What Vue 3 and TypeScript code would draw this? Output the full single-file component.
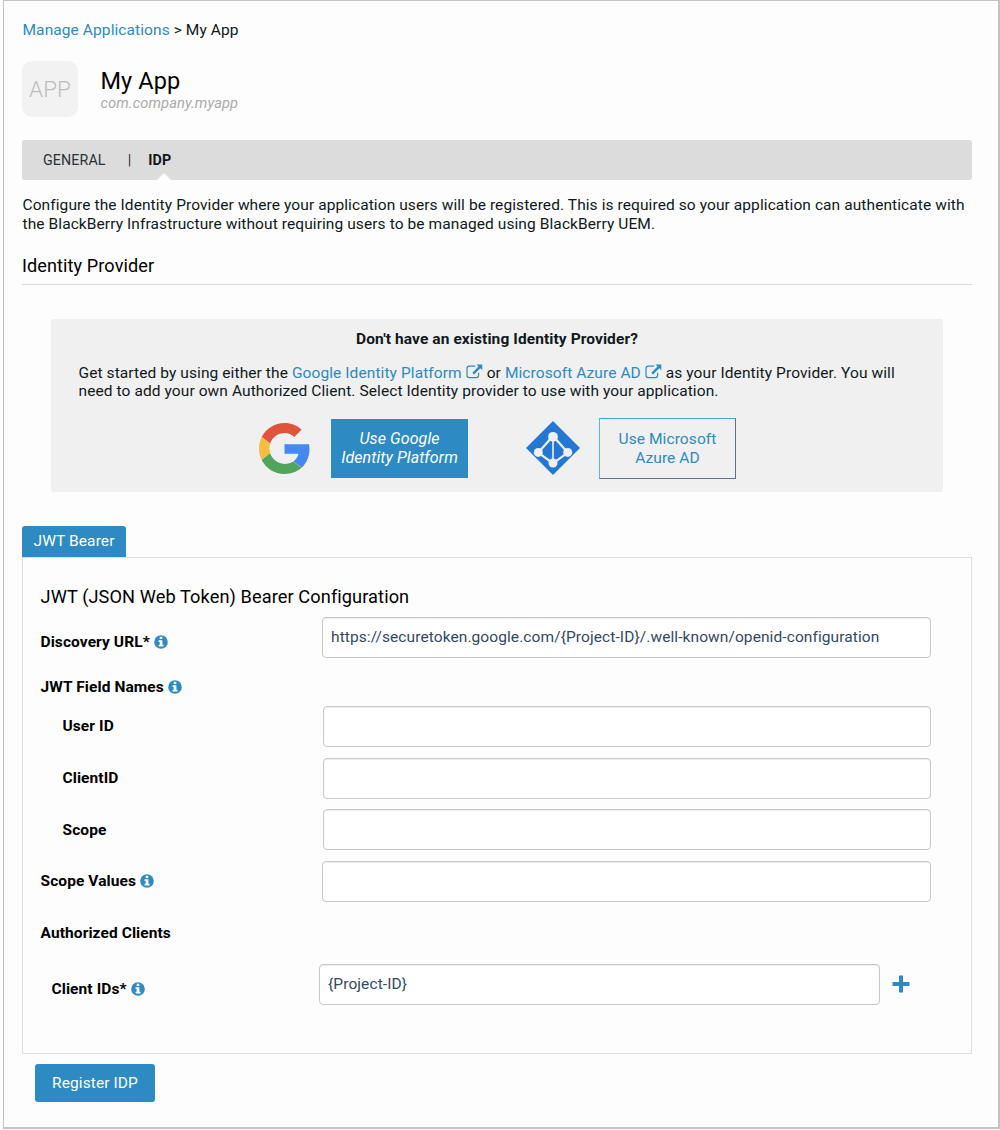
<script setup lang="ts">
import { ref } from 'vue'

interface FieldRow {
  key: string
  label: string
  level: 'top' | 'nested'
  info: boolean
  hasInput: boolean
}

const rows: FieldRow[] = [
  { key: 'discovery', label: 'Discovery URL*', level: 'top', info: true, hasInput: true },
  { key: 'names', label: 'JWT Field Names', level: 'top', info: true, hasInput: false },
  { key: 'user', label: 'User ID', level: 'nested', info: false, hasInput: true },
  { key: 'client', label: 'ClientID', level: 'nested', info: false, hasInput: true },
  { key: 'scope', label: 'Scope', level: 'nested', info: false, hasInput: true },
  { key: 'values', label: 'Scope Values', level: 'top', info: true, hasInput: true },
  { key: 'authorized', label: 'Authorized Clients', level: 'top', info: false, hasInput: false },
  { key: 'ids', label: 'Client IDs*', level: 'nested', info: true, hasInput: true },
]

const values = ref<Record<string, string>>({
  discovery: 'https://securetoken.google.com/{Project-ID}/.well-known/openid-configuration',
  user: '',
  client: '',
  scope: '',
  values: '',
  ids: '{Project-ID}',
})
</script>

<template>
  <div class="page">
    <nav class="crumbs"><a>Manage Applications</a> &gt; My App</nav>

    <header class="app-head">
      <div class="app-icon">APP</div>
      <div class="app-title">
        <h1>My App</h1>
        <p>com.company.myapp</p>
      </div>
    </header>

    <div class="tabs">
      <span class="tab">GENERAL</span>
      <span class="sep">|</span>
      <span class="tab active">IDP</span>
    </div>

    <p class="intro">
      Configure the Identity Provider where your application users will be registered. This is required so your application can authenticate with<br />
      the BlackBerry Infrastructure without requiring users to be managed using BlackBerry UEM.
    </p>

    <h2 class="section">Identity Provider</h2>

    <section class="promo">
      <h3>Don't have an existing Identity Provider?</h3>
      <p>
        Get started by using either the <a>Google Identity Platform <svg class="ext" viewBox="0 0 17 15"><path d="M9.2 2.1H3.4A2.4 2.4 0 0 0 1 4.5V11.3A2.4 2.4 0 0 0 3.4 13.7H10.2A2.4 2.4 0 0 0 12.6 11.3V8.7" fill="none" stroke="currentColor" stroke-width="1.2" /><path d="M10.5 0.4H16.3V6.2L14.3 4.2L8 10.4L6.3 8.7L12.5 2.4Z" fill="currentColor" /></svg></a> or <a>Microsoft Azure AD <svg class="ext" viewBox="0 0 17 15"><path d="M9.2 2.1H3.4A2.4 2.4 0 0 0 1 4.5V11.3A2.4 2.4 0 0 0 3.4 13.7H10.2A2.4 2.4 0 0 0 12.6 11.3V8.7" fill="none" stroke="currentColor" stroke-width="1.2" /><path d="M10.5 0.4H16.3V6.2L14.3 4.2L8 10.4L6.3 8.7L12.5 2.4Z" fill="currentColor" /></svg></a> as your Identity Provider. You will<br />
        need to add your own Authorized Client. Select Identity provider to use with your application.
      </p>
      <div class="choices">
        <svg class="google" viewBox="0 0 48 48">
          <path fill="#4688f1" d="M47.5 24.55c0-1.57-.15-3.09-.38-4.55H24v9.02h13.2c-.58 2.96-2.26 5.48-4.78 7.18l7.73 6c4.51-4.18 7.35-10.36 7.35-17.65z" />
          <path fill="#e0533d" d="M24 9.5c3.54 0 6.71 1.22 9.21 3.6l6.85-6.85C35.9 2.38 30.47 0 24 0 14.62 0 6.51 5.38 2.56 13.22l7.98 6.19C12.43 13.72 17.74 9.5 24 9.5z" />
          <path fill="#f6bd41" d="M10.53 28.59c-.48-1.45-.76-2.99-.76-4.59s.27-3.14.76-4.59l-7.98-6.19C.92 16.46 0 20.12 0 24c0 3.88.92 7.54 2.56 10.78l7.97-6.19z" />
          <path fill="#50a45c" d="M24 48c6.48 0 11.93-2.13 15.89-5.81l-7.73-6c-2.15 1.45-4.92 2.3-8.16 2.3-6.26 0-11.57-4.22-13.47-9.91l-7.98 6.19C6.51 42.62 14.62 48 24 48z" />
        </svg>
        <button class="choice solid" type="button">Use Google<br />Identity Platform</button>
        <svg class="azure" viewBox="0 0 54 54">
          <path d="M27 0L54 27L27 54L0 27Z" fill="#2478d4" />
          <path d="M27 15L12.3 31.6L27 42.3L41.7 31.6Z" fill="none" stroke="#f0f0f0" stroke-width="2.2" />
          <path d="M27 16V42" stroke="#f0f0f0" stroke-width="1.6" />
          <g fill="#f0f0f0">
            <circle cx="27" cy="15.8" r="4.9" />
            <circle cx="12.3" cy="31.4" r="4.5" />
            <circle cx="41.7" cy="31.4" r="4.5" />
            <circle cx="27" cy="42" r="4.5" />
          </g>
        </svg>
        <button class="choice outline" type="button">Use Microsoft<br />Azure AD</button>
      </div>
    </section>

    <div class="bearer-tab">JWT Bearer</div>
    <section class="panel">
      <h2>JWT (JSON Web Token) Bearer Configuration</h2>
      <div v-for="row in rows" :key="row.key" class="row" :class="[row.level, row.key]">
        <label :for="row.key">
          <span>{{ row.label }}</span>
          <svg v-if="row.info" class="info" viewBox="0 0 14 14">
            <circle cx="7" cy="7" r="6.8" fill="#2d8ac2" />
            <path d="M5.7 1.8H8.3V4H5.7ZM4.6 5.2H8.4V9.8H9.5V11.6H4.6V9.8H5.7V7H4.6Z" fill="#fff" />
          </svg>
        </label>
        <input v-if="row.hasInput" :id="row.key" v-model="values[row.key]" type="text" />
        <svg v-if="row.key === 'ids'" class="plus" viewBox="0 0 18 18">
          <path d="M7 0.5H11V7H17.5V11H11V17.5H7V11H0.5V7H7Z" fill="#2d8ac2" />
        </svg>
      </div>
    </section>

    <button class="register" type="button">Register IDP</button>
  </div>
</template>

<style>
body {
  margin: 0;
  background: #fdfdfd;
}
</style>

<style scoped>
.page {
  box-sizing: border-box;
  width: 997px;
  height: 1129px;
  margin-left: 3px;
  padding: 0 26px 0 18px;
  border: solid #c3c3c3;
  border-width: 1px 2px 2px 1px;
  background: #fdfdfd;
  font-family: Roboto, "Liberation Sans", sans-serif;
  font-size: 15.5px;
  line-height: 18.5px;
  letter-spacing: 0.09px;
  color: #101820;
}
h1, h2, h3, p {
  margin: 0;
  font-weight: 400;
}
a {
  color: #2d8ac2;
}
.crumbs {
  box-sizing: border-box;
  height: 41px;
  padding: 19.5px 0 0 0.5px;
}
.app-head {
  display: flex;
  margin-top: 19px;
  height: 79px;
}
.app-icon {
  width: 56px;
  height: 56px;
  border-radius: 10px;
  background: #f2f2f2;
  color: #bdbdbd;
  font-size: 22.5px;
  font-weight: 300;
  line-height: 56px;
  text-align: center;
  letter-spacing: 0;
}
.app-title {
  padding: 7px 0 0 22.5px;
}
.app-title h1 {
  font-size: 23.5px;
  line-height: 27px;
  color: #000;
}
.app-title p {
  font-size: 14.7px;
  line-height: 17px;
  font-style: italic;
  color: #aaa;
}
.tabs {
  display: flex;
  align-items: center;
  height: 40px;
  padding-left: 21px;
  border-radius: 3px;
  background: #dcdcdc;
  font-size: 14.3px;
  color: #2a3138;
}
.sep {
  margin: 0 17px 0 22px;
}
.tab.active {
  position: relative;
  color: #101820;
  font-weight: 700;
  line-height: 40px;
}
.tab.active::after {
  content: "";
  position: absolute;
  left: 9px;
  bottom: 0;
  border: solid transparent;
  border-width: 0 7px 7px;
  border-bottom-color: #fdfdfd;
}
.intro {
  margin-top: 16px;
  padding-left: 0.5px;
  white-space: nowrap;
}
.section {
  margin-top: 22px;
  height: 29px;
  border-bottom: 1px solid #d9d9d9;
  font-size: 18.1px;
  line-height: 22px;
  color: #000;
}
.promo {
  box-sizing: border-box;
  width: 892px;
  height: 173px;
  margin: 34px 0 0 29px;
  padding: 11px 0 0 27.5px;
  border-radius: 3px;
  background: #f0f0f0;
}
.promo h3 {
  margin-left: -27.5px;
  text-align: center;
  font-size: 15.5px;
  font-weight: 700;
}
.promo p {
  margin-top: 15px;
  white-space: nowrap;
}
.ext {
  width: 17px;
  height: 15px;
  vertical-align: -1px;
}
.choices {
  display: flex;
  align-items: center;
  margin-top: 17px;
  padding-left: 180.5px;
}
.google {
  width: 51px;
  height: 51px;
}
.azure {
  width: 54px;
  height: 54px;
  margin-left: 58px;
}
.choice {
  box-sizing: border-box;
  width: 137px;
  height: 59px;
  padding: 1px 0 0;
  font: inherit;
  letter-spacing: inherit;
}
.choice.solid {
  margin-left: 21px;
  border: 0;
  background: #2d8ac2;
  color: #fff;
  font-size: 16px;
  font-style: italic;
}
.choice.outline {
  margin-left: 19px;
  height: 61px;
  border: 1px solid;
  border-color: #35a7ea #5c7286 #5c7286 #58b4ec;
  background: transparent;
  color: #2d8ac2;
}
.bearer-tab {
  width: 104px;
  height: 31px;
  margin-top: 34px;
  border-radius: 3px 3px 0 0;
  background: #2d8ac2;
  color: #fff;
  line-height: 31px;
  text-align: center;
}
.panel {
  box-sizing: border-box;
  height: 497px;
  padding: 28px 0 0 17.5px;
  border: 1px solid #dedede;
}
.panel h2 {
  height: 31px;
  font-size: 18.2px;
  line-height: 22px;
  color: #000;
}
.row {
  display: flex;
  height: 51.7px;
}
.row label {
  display: flex;
  flex: none;
  align-items: center;
  gap: 4px;
  box-sizing: border-box;
  width: 281.5px;
  height: 41px;
  font-weight: 700;
  color: #000;
}
.row.nested label {
  width: 282.5px;
  padding-left: 22px;
}
.row input {
  box-sizing: border-box;
  width: 609px;
  height: 41px;
  padding: 0 8px 1px;
  border: 1px solid #c8c8c8;
  border-radius: 4px;
  background: #fff;
  box-shadow: inset 0 1px 1px rgba(0, 0, 0, 0.075);
  color: #34495e;
  font: inherit;
  letter-spacing: inherit;
}
.row.nested input {
  width: 608px;
}
.row.discovery {
  height: 50px;
}
.row.discovery label {
  padding-top: 10px;
}
.row.names {
  height: 39px;
}
.row.authorized {
  height: 51.4px;
}
.row.ids {
  height: 41px;
}
.row.ids label {
  width: 278.5px;
  padding: 10px 0 0 11px;
}
.row.ids input {
  width: 561px;
}
.info {
  width: 14px;
  height: 14px;
  margin-bottom: 1px;
}
.plus {
  width: 18px;
  height: 18px;
  margin: 11px 0 0 11.5px;
}
.register {
  display: block;
  width: 120px;
  height: 38px;
  margin: 10px 0 0 13px;
  padding: 0;
  border: 0;
  border-radius: 3px;
  background: #2d8ac2;
  color: #fff;
  font: inherit;
  letter-spacing: inherit;
}
</style>
